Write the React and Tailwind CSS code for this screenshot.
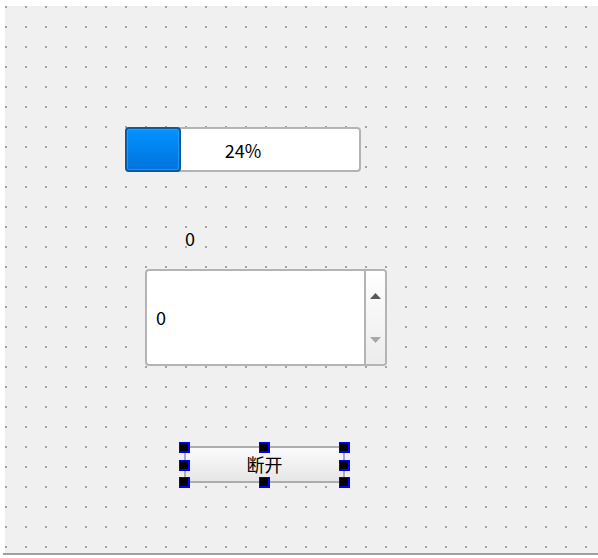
import React from 'react';

const font = { fontFamily: '"Noto Sans CJK SC", "Noto Sans", sans-serif' };

function Handle() {
    return (
        <div className="w-[11px] h-[11px] bg-[#0000ff] pl-[1px] pt-[1px]">
            <div className="w-[8px] h-[8px] bg-black"></div>
        </div>
    );
}

function DotGrid() {
    return (
        <svg className="absolute inset-0 w-full h-full" aria-hidden="true">
            <defs>
                <pattern id="dots" width="20" height="20" patternUnits="userSpaceOnUse">
                    <rect x="0" y="0" width="2" height="2" fill="#a4a4a4" />
                </pattern>
            </defs>
            <rect width="100%" height="100%" fill="url(#dots)" />
        </svg>
    );
}

export default function App() {
    return (
        <div className="w-[598px] h-[558px] bg-white overflow-hidden text-black pt-[6px]" style={font}>
            {/* form canvas */}
            <div className="relative ml-[5px] w-[593px] h-[547px] bg-[#f0f0f0]">
                <DotGrid />

                {/* progress bar */}
                <div className="absolute left-[120px] top-[121px] w-[236px] h-[45px] rounded-[4px] border-2 border-[#b4b4b4] bg-white grid">
                    <div className="col-start-1 row-start-1 -m-[2px] w-[56px] rounded-[4px] border-2 border-[#0b5a9e] bg-gradient-to-b from-[#0492ff] to-[#0073dc]">
                        <div className="w-full h-full rounded-[2px] border border-[#3aa8ff]/60"></div>
                    </div>
                    <span className="col-start-1 row-start-1 self-center text-center text-[18px] leading-none">24%</span>
                </div>

                {/* label */}
                <span className="absolute left-[180px] top-[221px] text-[18px] leading-[22px]">0</span>

                {/* spin box */}
                <div className="absolute left-[140px] top-[263px] w-[242px] h-[97px] rounded-[4px] border-2 border-[#b4b4b4] bg-white flex">
                    <div className="flex-1 flex items-center pl-[9px] text-[18px]">0</div>
                    <div className="w-[21px] border-l-2 border-[#b4b4b4] bg-gradient-to-b from-white to-[#ececec] rounded-r-[3px] flex flex-col items-center justify-between pt-[22px] pb-[21px]">
                        <svg width="11" height="6" viewBox="0 0 11 6">
                            <path d="M0 6 L5.5 0 L11 6 Z" fill="#5a5a5a" />
                        </svg>
                        <svg width="11" height="6" viewBox="0 0 11 6">
                            <path d="M0 0 L11 0 L5.5 6 Z" fill="#a8a8a8" />
                        </svg>
                    </div>
                </div>

                {/* push button, selected in the designer */}
                <div className="absolute left-[179px] top-[440px] w-[161px] h-[37px]">
                    <div className="w-full h-full border-2 border-[#adadad] bg-gradient-to-b from-[#fbfbfb] to-[#e6e6e6] flex items-center justify-center text-[18px]">
                        断开
                    </div>
                    <div className="absolute -left-[5px] -right-[5px] -top-[4px] -bottom-[5px] flex flex-col justify-between">
                        <div className="flex justify-between">
                            <Handle /><Handle /><Handle />
                        </div>
                        <div className="flex justify-between">
                            <Handle /><Handle />
                        </div>
                        <div className="flex justify-between">
                            <Handle /><Handle /><Handle />
                        </div>
                    </div>
                </div>
            </div>
            <div className="ml-[3px] w-[595px] h-[2px] bg-[#a0a0a0]"></div>
        </div>
    );
}
